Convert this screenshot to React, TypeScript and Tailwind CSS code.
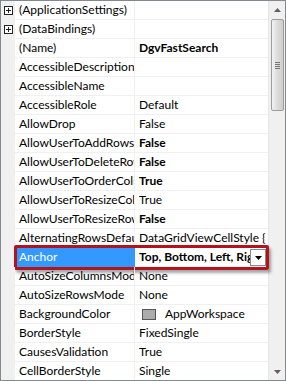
import React from "react";

type Row = { name: string; value?: string; bold?: boolean; expand?: boolean; swatch?: boolean };

const rows: Row[] = [
  { name: "(ApplicationSettings)", expand: true },
  { name: "(DataBindings)", expand: true },
  { name: "(Name)", value: "DgvFastSearch", bold: true },
  { name: "AccessibleDescription" },
  { name: "AccessibleName" },
  { name: "AccessibleRole", value: "Default" },
  { name: "AllowDrop", value: "False" },
  { name: "AllowUserToAddRows", value: "False", bold: true },
  { name: "AllowUserToDeleteRows", value: "False", bold: true },
  { name: "AllowUserToOrderColumns", value: "True", bold: true },
  { name: "AllowUserToResizeColumns", value: "True" },
  { name: "AllowUserToResizeRows", value: "False", bold: true },
  { name: "AlternatingRowsDefaultCellStyle", value: "DataGridViewCellStyle { }" },
  { name: "Anchor", value: "Top, Bottom, Left, Right", bold: true },
  { name: "AutoSizeColumnsMode", value: "None" },
  { name: "AutoSizeRowsMode", value: "None" },
  { name: "BackgroundColor", value: "AppWorkspace", swatch: true },
  { name: "BorderStyle", value: "FixedSingle" },
  { name: "CausesValidation", value: "True" },
  { name: "CellBorderStyle", value: "Single" },
];

function PlusBox() {
  return (
    <svg width="9" height="9" viewBox="0 0 9 9" className="block">
      <rect x="0.5" y="0.5" width="8" height="8" fill="#fff" stroke="#222" />
      <line x1="2" y1="4.5" x2="7" y2="4.5" stroke="#222" />
      <line x1="4.5" y1="2" x2="4.5" y2="7" stroke="#222" />
    </svg>
  );
}

export default function App() {
  return (
    <div
      className="w-[286px] h-[381px] border border-[#828790] bg-white flex overflow-hidden text-[12px] leading-none text-black"
      style={{ fontFamily: 'Lato, "Noto Sans", sans-serif' }}
    >
      <div className="flex-1 flex flex-col min-w-0">
        {rows.map((r, i) => {
          const sel = r.name === "Anchor";
          return (
            <div key={i} className="relative flex h-[19px] shrink-0">
              <div className="w-[14px] shrink-0 bg-[#f0f0f0] flex items-center justify-center">
                {r.expand && <PlusBox />}
              </div>
              <div
                className={
                  "w-[120px] shrink-0 flex items-center pl-[4px] overflow-hidden whitespace-nowrap border-b border-r " +
                  (sel ? "bg-[#3399ff] text-white border-[#3399ff]" : "border-[#f0f0f0]")
                }
              >
                <span>{r.name}</span>
              </div>
              <div className="flex-1 min-w-0 flex items-center pl-[4px] overflow-hidden whitespace-nowrap border-b border-[#f0f0f0]">
                {r.swatch && (
                  <span className="w-[14px] h-[11px] bg-[#ababab] border border-[#555] mr-[9px] ml-[3px] shrink-0" />
                )}
                {r.value && <span className={r.bold ? "font-bold" : ""}>{r.value}</span>}
              </div>
              {sel && (
                <>
                  <div className="absolute right-[2px] top-[1px] w-[16px] h-[17px] bg-white border border-[#8a8a8a] flex items-center justify-center">
                    <svg width="7" height="4" viewBox="0 0 7 4">
                      <path d="M0 0 L7 0 L3.5 4 Z" fill="#000" />
                    </svg>
                  </div>
                  <div className="absolute left-[13px] right-[-1px] top-[-3px] bottom-[-3px] border-[3px] border-[#b1141d] rounded-[2px] shadow-[2px_3px_3px_rgba(0,0,0,0.35)] pointer-events-none" />
                </>
              )}
            </div>
          );
        })}
      </div>
      <div className="w-[17px] shrink-0 bg-[#f0f0f0] flex flex-col items-center border-l border-[#e6e6e6]">
        <div className="h-[17px] w-full flex items-center justify-center">
          <svg width="7" height="4" viewBox="0 0 7 4">
            <path d="M0 4 L7 4 L3.5 0 Z" fill="#606060" />
          </svg>
        </div>
        <div className="mt-[1px] w-[13px] h-[92px] rounded-[2px] border border-[#9c9c9c] bg-gradient-to-r from-[#f2f2f2] via-[#dcdcdc] to-[#cdcdcd] flex flex-col items-center justify-center gap-[1px]">
          <div className="w-[5px] h-[1px] bg-[#777]" />
          <div className="w-[5px] h-[1px] bg-[#777]" />
          <div className="w-[5px] h-[1px] bg-[#777]" />
          <div className="w-[5px] h-[1px] bg-[#777]" />
        </div>
        <div className="flex-1" />
        <div className="h-[17px] w-full flex items-center justify-center">
          <svg width="7" height="4" viewBox="0 0 7 4">
            <path d="M0 0 L7 0 L3.5 4 Z" fill="#606060" />
          </svg>
        </div>
      </div>
    </div>
  );
}
